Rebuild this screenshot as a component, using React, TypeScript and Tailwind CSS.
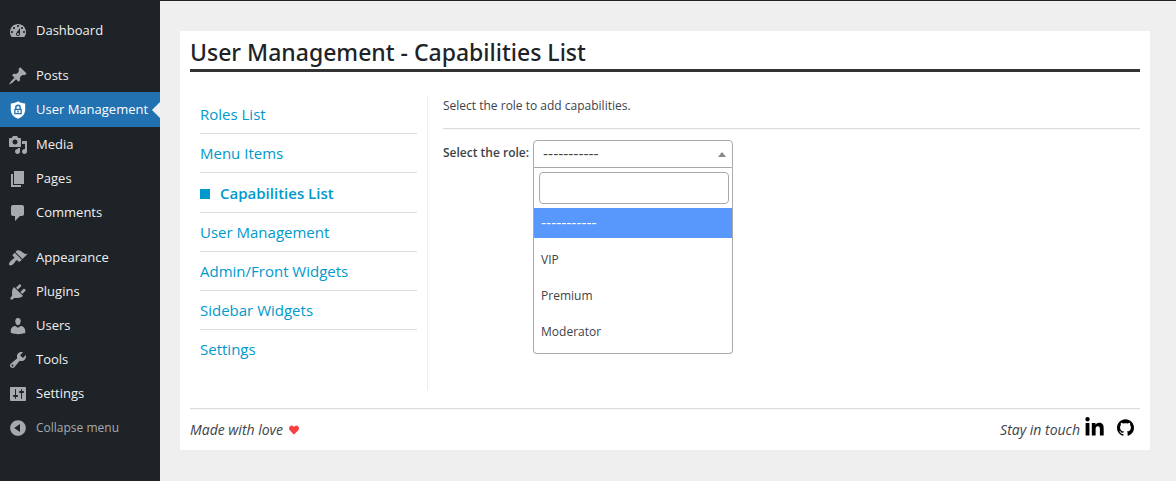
import { useState } from "react";
import { FaHeart } from "react-icons/fa";
import { FaLinkedinIn } from "react-icons/fa6";
import { SiGithub } from "react-icons/si";

type Entry = { label: string; icon: string };

const icons = {
  dashboard:
    "M3.76 16h12.48c1.1-1.37 1.76-3.11 1.76-5 0-4.42-3.58-8-8-8s-8 3.58-8 8c0 1.89.66 3.63 1.76 5zM10 4c.55 0 1 .45 1 1s-.45 1-1 1-1-.45-1-1 .45-1 1-1zM6 6c.55 0 1 .45 1 1s-.45 1-1 1-1-.45-1-1 .45-1 1-1zm8 0c.55 0 1 .45 1 1s-.45 1-1 1-1-.45-1-1 .45-1 1-1zm-5.37 5.55L12 7v6c0 1.1-.9 2-2 2s-2-.9-2-2c0-.57.24-1.08.63-1.45zM4 10c.55 0 1 .45 1 1s-.45 1-1 1-1-.45-1-1 .45-1 1-1zm12 0c.55 0 1 .45 1 1s-.45 1-1 1-1-.45-1-1 .45-1 1-1zm-5 3c0-.55-.45-1-1-1s-1 .45-1 1 .45 1 1 1 1-.45 1-1z",
  post: "M10.44 3.02l1.82-1.82 6.36 6.35-1.83 1.82c-1.05-.68-2.48-.57-3.41.36l-.75.75c-.92.93-1.04 2.35-.35 3.41l-1.83 1.82-2.41-2.41-2.8 2.79c-.42.42-3.38 2.71-3.8 2.29s1.86-3.39 2.28-3.81l2.79-2.79L4.1 9.36l1.83-1.82c1.05.69 2.48.57 3.4-.36l.75-.75c.93-.92 1.05-2.35.36-3.41z",
  shield:
    "M10 1.2C8 2.6 5.400 3.300 2.800 3.400V9.500c0 4.300 2.900 7.700 7.200 9.300 4.300-1.600 7.200-5 7.200-9.300V3.400C14.600 3.300 12 2.600 10 1.200zM10 4.600a2.900 2.900 0 0 1 2.900 2.900v1.200h.9v5.600H6.200V8.700h.9V7.500A2.900 2.900 0 0 1 10 4.600zm0 1.400a1.500 1.500 0 0 0-1.500 1.500v1.200h3V7.500A1.500 1.500 0 0 0 10 6zM7.500 10v3h5v-3zM9.300 10.500h1.400v2H9.300z",
  media:
    "M13 11V4c0-.55-.45-1-1-1h-1.67L9 1H5L3.67 3H2c-.55 0-1 .45-1 1v7c0 .55.45 1 1 1h10c.55 0 1-.45 1-1zM7 4.500c1.380 0 2.500 1.120 2.500 2.500S8.380 9.500 7 9.500 4.500 8.380 4.500 7 5.620 4.500 7 4.500zM14 6h5v10.500c0 1.380-1.120 2.500-2.500 2.500S14 17.880 14 16.500s1.120-2.500 2.500-2.500c.17 0 .34.02.5.05V9h-3V6zm-4 8.050V13h2v3.500c0 1.380-1.120 2.500-2.500 2.500S7 17.880 7 16.500 8.120 14 9.500 14c.17 0 .34.02.5.05z",
  page: "M6 15V2h10v13H6zm-1 1h8v2H3V5h2v11z",
  comment:
    "M5 2h9c1.1 0 2 .9 2 2v7c0 1.1-.9 2-2 2h-2l-5 5v-5H5c-1.1 0-2-.9-2-2V4c0-1.1.9-2 2-2z",
  appearance:
    "M14.48 11.06L7.41 3.99l1.5-1.5c.5-.56 2.3-.47 3.51.32 1.21.8 1.43 1.28 2.91 2.1 1.18.64 2.45 1.26 4.45.85zm-.71.71L6.7 4.7 4.93 6.47c-.39.39-.39 1.02 0 1.41l1.06 1.06c.39.39.39 1.03 0 1.42-.6.6-1.43 1.11-2.21 1.69-.35.26-.7.53-1.01.84C1.43 14.23.4 16.08 1.4 17.07c.99 1 2.84-.03 4.18-1.36.31-.31.58-.66.85-1.02.57-.78 1.08-1.61 1.69-2.21.39-.39 1.02-.39 1.41 0l1.06 1.06c.39.39 1.02.39 1.41 0z",
  plugin:
    "M13.11 4.36L9.87 7.6 8 5.73l3.24-3.24c.35-.34 1.05-.2 1.56.32.52.51.66 1.21.31 1.55zm-8 1.77l.91-1.12 9.01 9.01-1.19.84c-.71.71-2.63 1.16-3.82 1.16H6.14L4.9 17.26c-.59.59-1.54.59-2.12 0-.59-.58-.59-1.53 0-2.12l1.24-1.24v-3.88c0-1.13.4-3.19 1.09-3.89zm7.26 3.97l3.24-3.24c.34-.35 1.04-.21 1.55.31.52.51.66 1.21.31 1.55l-3.24 3.25z",
  users:
    "M10 9.25c-2.27 0-2.73-3.44-2.73-3.44C7 4.02 7.82 2 9.97 2c2.16 0 2.98 2.02 2.71 3.81 0 0-.41 3.44-2.68 3.44zm0 2.57L12.72 10c2.39 0 4.52 2.33 4.52 4.53v2.49s-3.65 1.13-7.24 1.13c-3.65 0-7.24-1.13-7.24-1.13v-2.49c0-2.25 1.94-4.48 4.47-4.48z",
  tools:
    "M16.68 9.77c-1.34 1.34-3.3 1.67-4.95.99l-5.41 6.52c-.99.99-2.59.99-3.58 0s-.99-2.59 0-3.57l6.52-5.42c-.68-1.65-.35-3.61.99-4.95 1.28-1.28 3.12-1.62 4.72-1.06l-2.89 2.89 2.82 2.82 2.86-2.87c.53 1.58.18 3.39-1.08 4.65zM3.81 16.21c.4.39 1.04.39 1.43 0 .4-.4.4-1.04 0-1.43-.39-.4-1.03-.4-1.43 0-.39.39-.39 1.03 0 1.43z",
  settings:
    "M18 16V4c0-.55-.45-1-1-1H3c-.55 0-1 .45-1 1v12c0 .55.45 1 1 1h14c.55 0 1-.45 1-1zM8 11h1c.55 0 1 .45 1 1s-.45 1-1 1H8v1.500c0 .28-.22.5-.5.5s-.5-.22-.5-.5V13H6c-.55 0-1-.45-1-1s.45-1 1-1h1V5.500c0-.28.22-.5.5-.5s.5.22.5.5V11zm5-2h-1c-.55 0-1-.45-1-1s.45-1 1-1h1V5.500c0-.28.22-.5.5-.5s.5.22.5.5V7h1c.55 0 1 .45 1 1s-.45 1-1 1h-1v5.500c0 .28-.22.5-.5.5s-.5-.22-.5-.5V9z",
  collapse:
    "M10 2.160c4.330 0 7.840 3.510 7.840 7.840s-3.510 7.840-7.840 7.840S2.160 14.330 2.160 10 5.710 2.160 10 2.160zm2 11.720V6.120L6.180 9.970z",
};

const groups: Entry[][] = [
  [{ label: "Dashboard", icon: icons.dashboard }],
  [
    { label: "Posts", icon: icons.post },
    { label: "User Management", icon: icons.shield },
    { label: "Media", icon: icons.media },
    { label: "Pages", icon: icons.page },
    { label: "Comments", icon: icons.comment },
  ],
  [
    { label: "Appearance", icon: icons.appearance },
    { label: "Plugins", icon: icons.plugin },
    { label: "Users", icon: icons.users },
    { label: "Tools", icon: icons.tools },
    { label: "Settings", icon: icons.settings },
  ],
];

const tabs = [
  "Roles List",
  "Menu Items",
  "Capabilities List",
  "User Management",
  "Admin/Front Widgets",
  "Sidebar Widgets",
  "Settings",
];

const placeholder = "-----------";
const roles = ["VIP", "Premium", "Moderator"];

function MenuIcon({ d }: { d: string }) {
  return (
    <svg viewBox="0 0 20 20" className="size-5 shrink-0 fill-current" fillRule="evenodd" aria-hidden="true">
      <path d={d} />
    </svg>
  );
}

function Sidebar() {
  return (
    <nav aria-label="Main menu" className="w-40 shrink-0 bg-[#1d2327] pt-[13px] text-[13px] text-[#f0f0f1]">
      <div className="flex flex-col gap-[11px]">
        {groups.map((group, i) => (
          <ul key={i}>
            {group.map(({ label, icon }) => {
              const current = label === "User Management";
              return (
                <li key={label}>
                  <a
                    href="#"
                    aria-current={current ? "page" : undefined}
                    className={
                      current
                        ? "relative flex h-[35px] items-center gap-2 bg-[#2271b1] pl-2 whitespace-nowrap text-white"
                        : "flex h-[34px] items-center gap-2 pt-0.5 pl-2 whitespace-nowrap"
                    }
                  >
                    <span className={current ? "text-white" : "text-[#a7aaad]"}>
                      <MenuIcon d={icon} />
                    </span>
                    {label}
                    {current && (
                      <span className="absolute top-1/2 right-0 -translate-y-1/2 border-y-8 border-r-8 border-y-transparent border-r-[#f0f0f1]" />
                    )}
                  </a>
                </li>
              );
            })}
          </ul>
        ))}
      </div>
      <button type="button" className="flex h-[34px] w-full items-center gap-2 pt-0.5 pl-2 text-xs text-[#a7aaad]">
        <MenuIcon d={icons.collapse} />
        Collapse menu
      </button>
    </nav>
  );
}

function RoleSelect() {
  const [open, setOpen] = useState(true);
  const [value, setValue] = useState(placeholder);
  const [query, setQuery] = useState("");
  const visible = roles.filter((r) => r.toLowerCase().includes(query.toLowerCase()));
  const choose = (role: string) => {
    setValue(role);
    setOpen(false);
  };

  return (
    <div className="relative w-[200px]">
      <button
        id="role"
        type="button"
        role="combobox"
        aria-expanded={open}
        aria-controls="role-list"
        onClick={() => setOpen(!open)}
        className="flex h-7 w-full items-center justify-between rounded-t border border-[#aaa] bg-white pr-1.5 pl-[9px] text-[#444]"
      >
        <span className={value === placeholder ? "font-['DejaVu_Sans',sans-serif] text-[14px]" : ""}>{value}</span>
        <span className="border-x-4 border-b-[5px] border-x-transparent border-b-[#888]" />
      </button>
      {open && (
        <div className="absolute top-full left-0 z-10 w-full rounded-b border border-t-0 border-[#aaa] bg-white">
          <div className="py-1 pr-[3px] pl-[5px]">
            <input
              type="search"
              aria-label="Search roles"
              value={query}
              onChange={(e) => setQuery(e.target.value)}
              className="block h-8 w-full rounded border border-[#aaa] px-1 outline-none"
            />
          </div>
          <ul id="role-list" role="listbox" aria-label="Roles" className="pb-[3px]">
            <li
              role="option"
              aria-selected="true"
              onClick={() => choose(placeholder)}
              className="mb-1 flex h-[30px] items-center bg-[#5897fb] px-[7px] font-['DejaVu_Sans',sans-serif] text-[14px] text-white"
            >
              {placeholder}
            </li>
            {visible.map((role) => (
              <li
                key={role}
                role="option"
                aria-selected="false"
                onClick={() => choose(role)}
                className="flex h-9 items-center px-[7px]"
              >
                {role}
              </li>
            ))}
          </ul>
        </div>
      )}
    </div>
  );
}

export default function App() {
  return (
    <div className="flex min-h-screen bg-[#f0f0f1] font-['Open_Sans','Noto_Sans',sans-serif] text-[#3c434a]">
      <Sidebar />
      <main className="min-w-0 flex-1 border-t border-[#1d2327] bg-[#efefef] pt-[30px] pr-[26px] pl-5">
        <div className="bg-white px-2.5 text-[12px]">
          <h1 className="border-b-[3px] border-[#333] pt-1 font-['Noto_Sans','Open_Sans',sans-serif] text-[23px] leading-[34px] font-medium text-[#1d2327]">
            User Management - Capabilities List
          </h1>
          <div className="flex pt-[23px] pb-[18px]">
            <nav aria-label="Sections" className="w-[238px] shrink-0 border-r border-[#eee] pr-2.5 pb-[22px] pl-2.5 text-[15px] text-[#0099cc]">
              <ul className="divide-y divide-[#ddd]">
                {tabs.map((tab) => {
                  const current = tab === "Capabilities List";
                  return (
                    <li key={tab}>
                      <a
                        href="#"
                        aria-current={current ? "page" : undefined}
                        className={current ? "flex h-[39px] items-center gap-2.5 pt-0.5 font-semibold" : "flex h-[38px] items-center"}
                      >
                        {current && <span className="size-2.5 bg-[#0099cc]" />}
                        {tab}
                      </a>
                    </li>
                  );
                })}
              </ul>
            </nav>
            <section className="min-w-0 flex-1 pl-[15px]">
              <p className="border-b border-[#ddd] pt-0.5 pb-[13px] leading-[18px] shadow-[0_1px_#f6f6f6]">
                Select the role to add capabilities.
              </p>
              <div className="flex items-start gap-1 pt-[11px]">
                <label htmlFor="role" className="leading-[26px] font-semibold">
                  Select the role:
                </label>
                <RoleSelect />
              </div>
            </section>
          </div>
          <footer className="flex items-center justify-between border-t border-[#ddd] text-[14px] italic shadow-[inset_0_1px_#f6f6f6]">
            <p className="flex h-[41px] items-center gap-1.5">
              Made with love
              <FaHeart className="size-2.5 text-[#f94144]" aria-label="love" />
            </p>
            <div className="flex items-center gap-1 pr-1.5">
              <span>Stay in touch</span>
              <a href="#" aria-label="LinkedIn" className="pb-1 text-black">
                <FaLinkedinIn className="size-[21px]" />
              </a>
              <a href="#" aria-label="GitHub" className="ml-2 pb-1 text-black">
                <SiGithub className="size-[17px]" />
              </a>
            </div>
          </footer>
        </div>
      </main>
    </div>
  );
}
